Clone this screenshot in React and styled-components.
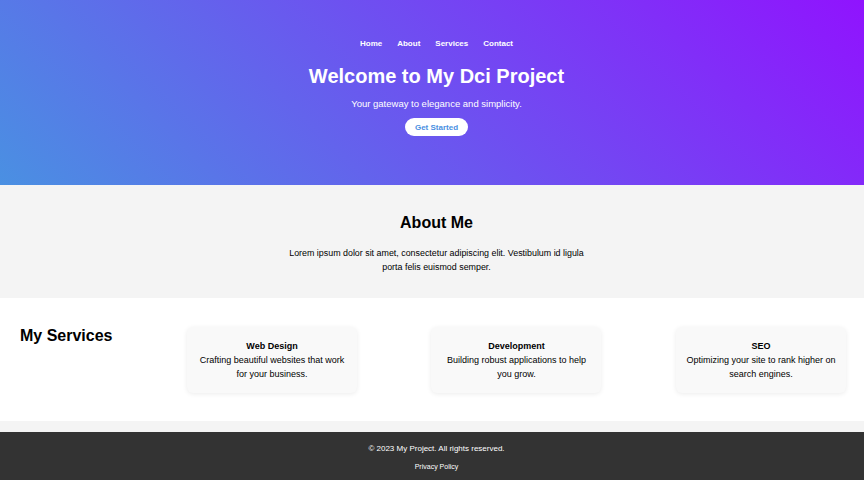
import React from "react";
import styled, { createGlobalStyle } from "styled-components";

const GlobalStyle = createGlobalStyle`
  body {
    margin: 0;
    background: #f4f4f4;
    font-family: "Liberation Sans", Arial, sans-serif;
    color: #000;
  }
`;

// centred blocks sit a few px right of the window centre in the reference
const Hero = styled.header`
  height: 185px;
  box-sizing: border-box;
  padding: 37px 0 0 9px;
  background: linear-gradient(45deg, #4a90e2 0%, #9013fe 100%);
  color: #fff;
  text-align: center;
`;

const Nav = styled.nav`
  display: flex;
  justify-content: center;
  gap: 15px;

  a {
    color: #fff;
    text-decoration: none;
    font-size: 8px;
    font-weight: bold;
    line-height: 14px;
  }
`;

const Title = styled.h1`
  margin: 11px 0 0;
  font-size: 20px;
  line-height: 28px;
`;

const Tagline = styled.p`
  margin: 7px 0 0;
  font-size: 9.5px;
  line-height: 14px;
`;

const CtaButton = styled.button`
  margin-top: 7px;
  width: 63px;
  height: 18px;
  padding: 0;
  border: none;
  border-radius: 9px;
  background: #fff;
  color: #4a90e2;
  font-family: inherit;
  font-size: 8px;
  font-weight: bold;
  cursor: pointer;
`;

const About = styled.section`
  height: 113px;
  box-sizing: border-box;
  padding: 28px 0 0 9px;
  text-align: center;

  h2 {
    margin: 0;
    font-size: 16px;
    line-height: 20px;
  }

  p {
    width: 310px;
    margin: 13px auto 0;
    font-size: 8.9px;
    line-height: 14px;
  }
`;

const Services = styled.section`
  display: flex;
  justify-content: space-between;
  align-items: flex-start;
  height: 123px;
  box-sizing: border-box;
  padding: 28px 18px 0 20px;
  background: #fff;

  h2 {
    margin: 0;
    font-size: 16px;
    line-height: 20px;
  }
`;

const Card = styled.div`
  width: 170px;
  box-sizing: border-box;
  margin-top: 1px;
  padding: 12px 10px;
  border-radius: 6px;
  background: #f9f9f9;
  box-shadow: 0 1px 5px rgba(0, 0, 0, 0.08);
  text-align: center;

  h3 {
    margin: 0;
    font-size: 9px;
    line-height: 14px;
  }

  p {
    margin: 0;
    font-size: 9px;
    line-height: 14px;
  }
`;

const Footer = styled.footer`
  margin-top: 11px;
  height: 48px;
  box-sizing: border-box;
  padding: 11px 0 0 9px;
  background: #333;
  color: #fff;
  text-align: center;

  p {
    margin: 0;
    font-size: 8px;
    line-height: 12px;
  }

  a {
    display: inline-block;
    margin-top: 3px;
    color: #fff;
    text-decoration: none;
    font-size: 7px;
    line-height: 10px;
  }
`;

const services = [
  { title: "Web Design", text: "Crafting beautiful websites that work for your business." },
  { title: "Development", text: "Building robust applications to help you grow." },
  { title: "SEO", text: "Optimizing your site to rank higher on search engines." },
];

export default function App() {
  return (
    <>
      <GlobalStyle />
      <Hero>
        <Nav>
          <a href="#home">Home</a>
          <a href="#about">About</a>
          <a href="#services">Services</a>
          <a href="#contact">Contact</a>
        </Nav>
        <Title>Welcome to My Dci Project</Title>
        <Tagline>Your gateway to elegance and simplicity.</Tagline>
        <CtaButton>Get Started</CtaButton>
      </Hero>
      <About>
        <h2>About Me</h2>
        <p>
          Lorem ipsum dolor sit amet, consectetur adipiscing elit. Vestibulum id ligula porta felis
          euismod semper.
        </p>
      </About>
      <Services>
        <h2>My Services</h2>
        {services.map((s) => (
          <Card key={s.title}>
            <h3>{s.title}</h3>
            <p>{s.text}</p>
          </Card>
        ))}
      </Services>
      <Footer>
        <p>&copy; 2023 My Project. All rights reserved.</p>
        <a href="#privacy">Privacy Policy</a>
      </Footer>
    </>
  );
}
